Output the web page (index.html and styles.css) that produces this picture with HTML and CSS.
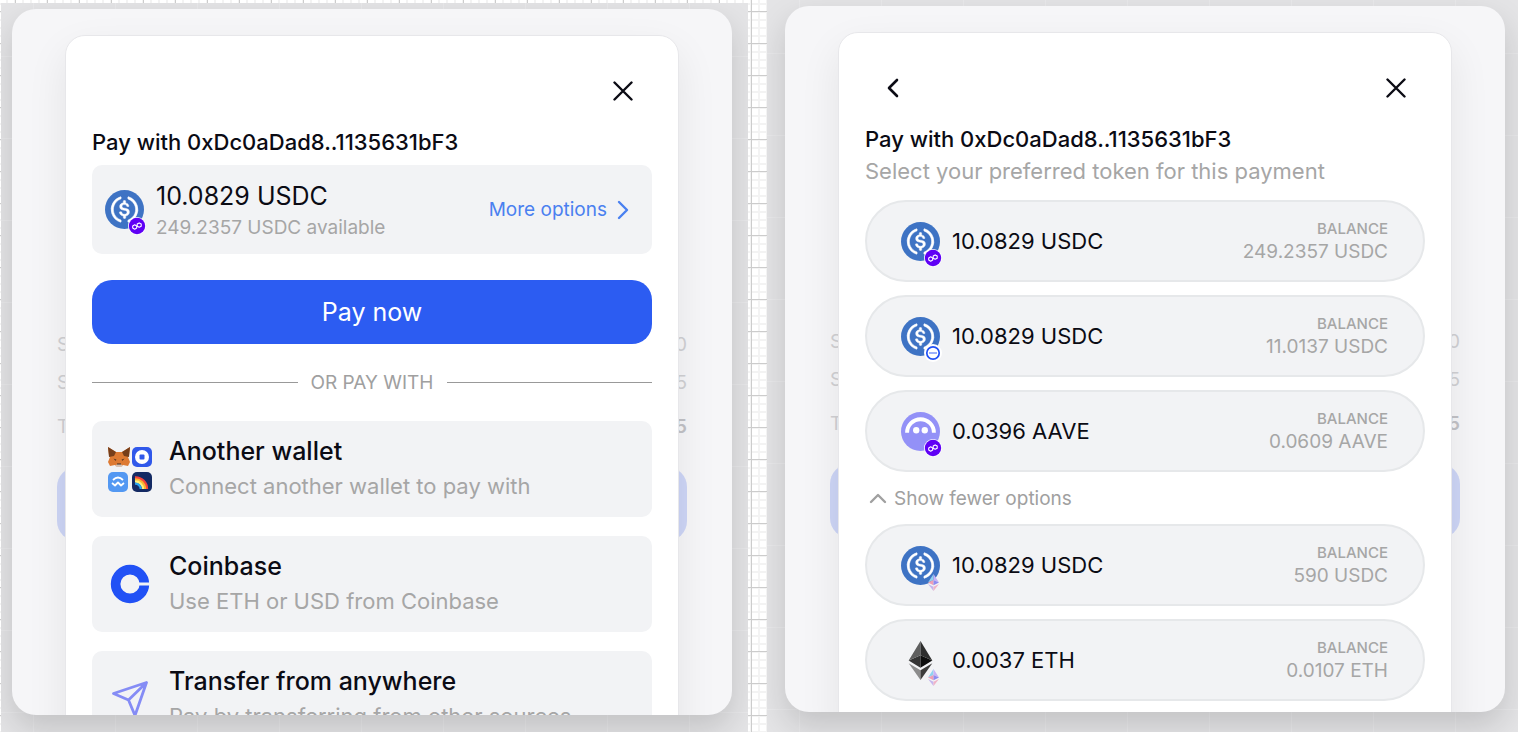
FILE: index.html
```html
<!DOCTYPE html>
<html lang="en">
<head>
    <meta charset="UTF-8">
    <meta name="viewport" content="width=device-width, initial-scale=1.0">
    <title>Pay with wallet</title>
    <link rel="stylesheet" href="styles.css">
</head>
<body>

<svg class="sprite" aria-hidden="true">
    <symbol id="close" viewBox="0 0 20 20">
        <path d="M1.500 1.500l17 17M18.500 1.500l-17 17" fill="none" stroke="currentColor" stroke-width="2.400" stroke-linecap="round"/>
    </symbol>
    <symbol id="usdc" viewBox="0 0 32 32">
        <circle cx="16" cy="16" r="16" fill="#3e73c4"/>
        <path fill="#fff" stroke="#fff" stroke-width=".4" d="M20.022 18.124c0-2.124-1.28-2.852-3.84-3.156-1.828-.243-2.193-.728-2.193-1.578 0-.85.61-1.396 1.828-1.396 1.097 0 1.707.364 2.011 1.275a.458.458 0 00.427.303h.975a.416.416 0 00.427-.425v-.06a3.04 3.04 0 00-2.743-2.489V9.142c0-.243-.183-.425-.487-.486h-.915c-.243 0-.426.182-.487.486v1.396c-1.829.242-2.986 1.456-2.986 2.974 0 2.002 1.218 2.791 3.778 3.095 1.707.303 2.255.668 2.255 1.639 0 .97-.853 1.638-2.011 1.638-1.585 0-2.133-.667-2.316-1.578-.06-.242-.244-.364-.427-.364h-1.036a.416.416 0 00-.426.425v.06c.243 1.518 1.219 2.61 3.23 2.914v1.457c0 .242.183.425.487.485h.915c.243 0 .426-.182.487-.485V21.34c1.829-.303 3.047-1.578 3.047-3.217z"/>
        <path fill="#fff" stroke="#fff" stroke-width=".4" d="M12.892 24.497c-4.754-1.7-7.192-6.98-5.424-11.653.914-2.55 2.925-4.491 5.424-5.402.244-.121.365-.303.365-.607v-.85c0-.242-.121-.424-.365-.485-.061 0-.183 0-.244.06a10.895 10.895 0 00-7.13 13.717c1.096 3.4 3.717 6.01 7.13 7.102.244.121.488 0 .548-.243.061-.06.061-.122.061-.243v-.85c0-.182-.182-.424-.365-.546zm6.46-18.936c-.244-.122-.488 0-.548.242-.061.061-.061.122-.061.243v.85c0 .243.182.485.365.607 4.754 1.7 7.192 6.98 5.424 11.653-.914 2.55-2.925 4.491-5.424 5.402-.244.121-.365.303-.365.607v.85c0 .242.121.424.365.485.061 0 .183 0 .244-.06a10.895 10.895 0 007.13-13.717c-1.096-3.46-3.778-6.07-7.13-7.162z"/>
    </symbol>
    <symbol id="aave" viewBox="0 0 32 32">
        <circle cx="16" cy="16" r="16" fill="#9391f7"/>
        <path d="M5 17a11 11 0 0 1 22 0" fill="none" stroke="#fff" stroke-width="3.200"/>
        <circle cx="12.500" cy="15" r="2.600" fill="#fff"/>
        <circle cx="19.500" cy="15" r="2.600" fill="#fff"/>
    </symbol>
    <symbol id="eth" viewBox="0 0 32 32">
        <path fill="#343434" d="M6.300 16.100l9.700-4.400v10.200z"/>
        <path fill="#0e0e0e" d="M25.700 16.100l-9.700-4.400v10.200z"/>
        <path fill="#5f5f5f" d="M16 0l-5 8.300-4.700 7.800 9.700-4.500z"/>
        <path fill="#2e2e2e" d="M16 0v11.600l9.700 4.500z"/>
        <path fill="#8c8c8c" d="M6.300 18.200l9.700 5.700v8z"/>
        <path fill="#3c3c3b" d="M25.700 18.200l-9.700 5.700v8z"/>
    </symbol>
    <symbol id="polygon" viewBox="0 0 18 18">
        <circle cx="9" cy="9" r="9" fill="#fff"/>
        <circle cx="9" cy="9" r="8.200" fill="#6000f5"/>
        <g fill="none" stroke="#fff" stroke-width="1.100" stroke-linejoin="round">
            <path d="M6.700 7.800l2 1.100v2.200l-2 1.100-2-1.100V8.900z"/>
            <path d="M11.200 5.900l2 1.100v2.200l-2 1.100-2-1.100V7z"/>
        </g>
    </symbol>
    <symbol id="base" viewBox="0 0 18 18">
        <circle cx="9" cy="9" r="9" fill="#fff"/>
        <circle cx="9" cy="9" r="6.200" fill="#fff" stroke="#2151f5" stroke-width="1.700"/>
        <path d="M5 9h8" stroke="#5a7cf7" stroke-width="1.200"/>
    </symbol>
    <symbol id="mainnet" viewBox="0 0 18 18">
        <path fill="#8fd3f0" d="M9.500 1v6L4 9.500z"/>
        <path fill="#c9b3f5" d="M9.500 1v6L15 9.500z"/>
        <path fill="#ef9fb5" d="M9.500 7v5.200L4 9.500z"/>
        <path fill="#8f8cf0" d="M9.500 7v5.200L15 9.500z"/>
        <path fill="#c5b6ee" d="M4 11l5.500 2.700V18z"/>
        <path fill="#f0b4c8" d="M15 11l-5.500 2.700V18z"/>
    </symbol>
</svg>

<div class="panel panel-left">
    <div class="stage">
        <div class="receipt">
            <div class="receipt-row"><span>S</span><span>0</span></div>
            <div class="receipt-row"><span>S</span><span>5</span></div>
            <div class="receipt-row receipt-total"><span>T</span><b>5</b></div>
            <div class="receipt-bar"></div>
        </div>

        <div class="modal">
            <div class="modal-head">
                <button class="icon-btn close-btn" aria-label="Close"><svg width="20" height="20"><use href="#close"/></svg></button>
            </div>
            <h2>Pay with 0xDc0aDad8..1135631bF3</h2>

            <div class="selected">
                <span class="token-icon">
                    <svg class="token" viewBox="0 0 32 32"><use href="#usdc"/></svg>
                    <svg class="badge" viewBox="0 0 18 18"><use href="#polygon"/></svg>
                </span>
                <div class="selected-text">
                    <div class="amount">10.0829 USDC</div>
                    <div class="available">249.2357 USDC available</div>
                </div>
                <button class="more-btn">More options
                    <svg width="12" height="20" viewBox="0 0 12 20"><path d="M2 2l8 8-8 8" fill="none" stroke="currentColor" stroke-width="2.400" stroke-linecap="round" stroke-linejoin="round"/></svg>
                </button>
            </div>

            <button class="pay-btn">Pay now</button>

            <div class="divider"><span>OR PAY WITH</span></div>

            <div class="options">
                <button class="option">
                    <span class="option-icon">
                        <svg width="46" height="46" viewBox="0 0 46 46">
                            <path fill="#dd7a33" d="M1 1l8 5h6l8-5-1 8-1 2 2 5-2 4-5-1-1 1H9l-1-1-5 1-2-4 2-5-1-2z"/>
                            <path fill="#763e1a" d="M1 1l8 5-2 4-5 1zM23 1l-8 5 2 4 5 1z"/>
                            <path fill="#3b2a20" d="M6.500 12.500l3 1.200-1 1zM17.500 12.500l-3 1.200 1 1zM10 17.500h4v1.500h-4z"/>
                            <path fill="#d7c1b3" d="M8 19.500l2-1h4l2 1-1.500 1.500h-5z"/>
                            <rect x="25" y="1" width="20" height="20" rx="5" fill="#3058ea"/>
                            <circle cx="35" cy="11" r="7" fill="#fff"/>
                            <rect x="32.500" y="8.500" width="5" height="5" rx="1" fill="#3058ea"/>
                            <rect x="1" y="26" width="20" height="20" rx="5" fill="#5398f2"/>
                            <path d="M6 34q5-5 10 0M5 37l3 2.500 3-3 3 3 3-2.500" fill="none" stroke="#fff" stroke-width="1.800" stroke-linejoin="round"/>
                            <rect x="25" y="26" width="20" height="20" rx="5" fill="#142a63"/>
                            <g fill="none" stroke-width="2.400">
                                <path d="M28 31.500a11.500 11.500 0 0 1 12 11.500" stroke="#f4433c"/>
                                <path d="M28 33.500a9.500 9.500 0 0 1 10 9.500" stroke="#ffb52e"/>
                                <path d="M28 35.500a7.500 7.500 0 0 1 8 7.500" stroke="#fff07a"/>
                                <path d="M28 37.700a5.300 5.300 0 0 1 5.800 5.300" stroke="#2aa5f0"/>
                            </g>
                        </svg>
                    </span>
                    <span class="option-text">
                        <span class="option-title">Another wallet</span>
                        <span class="option-desc">Connect another wallet to pay with</span>
                    </span>
                </button>
                <button class="option">
                    <span class="option-icon">
                        <svg width="40" height="40" viewBox="0 0 40 40">
                            <circle cx="20" cy="20" r="14.400" fill="none" stroke="#2151f5" stroke-width="9.600"/>
                            <path d="M28 20h12" stroke="#f2f3f5" stroke-width="3.200"/>
                        </svg>
                    </span>
                    <span class="option-text">
                        <span class="option-title">Coinbase</span>
                        <span class="option-desc">Use ETH or USD from Coinbase</span>
                    </span>
                </button>
                <button class="option">
                    <span class="option-icon">
                        <svg width="40" height="40" viewBox="0 0 40 40">
                            <path d="M36.500 3.500L3.500 14.500l15 6.500L25 36.500zM36.500 3.500L18.500 21" fill="none" stroke="#858cf5" stroke-width="2.800" stroke-linejoin="round"/>
                        </svg>
                    </span>
                    <span class="option-text">
                        <span class="option-title">Transfer from anywhere</span>
                        <span class="option-desc">Pay by transferring from other sources</span>
                    </span>
                </button>
            </div>
        </div>
    </div>
</div>

<div class="panel panel-right">
    <div class="stage">
        <div class="receipt">
            <div class="receipt-row"><span>S</span><span>0</span></div>
            <div class="receipt-row"><span>S</span><span>5</span></div>
            <div class="receipt-row receipt-total"><span>T</span><b>5</b></div>
            <div class="receipt-bar"></div>
        </div>

        <div class="modal">
            <div class="modal-head">
                <button class="icon-btn back-btn" aria-label="Back"><svg width="12" height="20" viewBox="0 0 12 20"><path d="M10 2l-8 8 8 8" fill="none" stroke="currentColor" stroke-width="2.600" stroke-linecap="round" stroke-linejoin="round"/></svg></button>
                <button class="icon-btn close-btn" aria-label="Close"><svg width="20" height="20"><use href="#close"/></svg></button>
            </div>
            <h2>Pay with 0xDc0aDad8..1135631bF3</h2>
            <p class="subtitle">Select your preferred token for this payment</p>

            <div class="tokens">
                <button class="token-row">
                    <span class="token-icon">
                        <svg class="token" viewBox="0 0 32 32"><use href="#usdc"/></svg>
                        <svg class="badge" viewBox="0 0 18 18"><use href="#polygon"/></svg>
                    </span>
                    <span class="token-amount">10.0829 USDC</span>
                    <span class="balance"><small>BALANCE</small>249.2357 USDC</span>
                </button>
                <button class="token-row">
                    <span class="token-icon">
                        <svg class="token" viewBox="0 0 32 32"><use href="#usdc"/></svg>
                        <svg class="badge" viewBox="0 0 18 18"><use href="#base"/></svg>
                    </span>
                    <span class="token-amount">10.0829 USDC</span>
                    <span class="balance"><small>BALANCE</small>11.0137 USDC</span>
                </button>
                <button class="token-row">
                    <span class="token-icon">
                        <svg class="token" viewBox="0 0 32 32"><use href="#aave"/></svg>
                        <svg class="badge" viewBox="0 0 18 18"><use href="#polygon"/></svg>
                    </span>
                    <span class="token-amount">0.0396 AAVE</span>
                    <span class="balance"><small>BALANCE</small>0.0609 AAVE</span>
                </button>
            </div>

            <button class="toggle-btn">
                <svg width="18" height="12" viewBox="0 0 18 12"><path d="M2 10l7-7 7 7" fill="none" stroke="currentColor" stroke-width="2.400" stroke-linecap="round" stroke-linejoin="round"/></svg>
                Show fewer options
            </button>

            <div class="tokens">
                <button class="token-row">
                    <span class="token-icon">
                        <svg class="token" viewBox="0 0 32 32"><use href="#usdc"/></svg>
                        <svg class="badge" viewBox="0 0 18 18"><use href="#mainnet"/></svg>
                    </span>
                    <span class="token-amount">10.0829 USDC</span>
                    <span class="balance"><small>BALANCE</small>590 USDC</span>
                </button>
                <button class="token-row">
                    <span class="token-icon">
                        <svg class="token" viewBox="0 0 32 32"><use href="#eth"/></svg>
                        <svg class="badge" viewBox="0 0 18 18"><use href="#mainnet"/></svg>
                    </span>
                    <span class="token-amount">0.0037 ETH</span>
                    <span class="balance"><small>BALANCE</small>0.0107 ETH</span>
                </button>
            </div>
        </div>
    </div>
</div>

</body>
</html>
```
FILE: styles.css
```css
* {
    box-sizing: border-box;
}
body {
    margin: 0;
    height: 100vh;
    display: flex;
    gap: 19px;
    padding-left: 1px;
    font-family: Inter, sans-serif;
    color: #0b0b14;
    background-color: #fff;
    background-image:
        linear-gradient(#ccc 1px, transparent 1px),
        linear-gradient(90deg, #ccc 1px, transparent 1px),
        linear-gradient(#f3f3f3 2px, transparent 2px),
        linear-gradient(90deg, #f3f3f3 2px, transparent 2px);
    background-size: 32px 32px, 32px 32px, 8px 8px, 8px 8px;
    background-position: 0 11px, 15px 0, 0 3px, 6px 0;
}
button {
    font-family: inherit;
    color: inherit;
    border: none;
    background: none;
    padding: 0;
    cursor: pointer;
}
svg {
    display: block;
    flex-shrink: 0;
}
.sprite {
    position: absolute;
    width: 0;
    height: 0;
}
.panel {
    min-width: 0;
    display: flex;
    overflow: hidden;
    background-color: #e4e4e6;
    background-image:
        linear-gradient(#e9e9eb 1px, transparent 1px),
        linear-gradient(90deg, #e9e9eb 1px, transparent 1px);
    background-size: 82px 82px;
    background-position: 32px 53px;
}
.panel-left {
    flex: 1 1 747px;
    margin-top: 3px;
    padding: 6px 16px 17px 11px;
}
.panel-right {
    flex: 1 1 751px;
    padding: 6px 13px 20px 18px;
}
.stage {
    position: relative;
    flex: 1;
    overflow: hidden;
    border-radius: 24px;
    background: #f6f6f8;
    box-shadow: 0 14px 32px rgba(0, 0, 0, 0.15);
}

/* order summary behind the modal */
.receipt {
    padding: 317px 45px 0;
    font-size: 19px;
    color: #d0d0d3;
}
.receipt-row {
    display: flex;
    justify-content: space-between;
    line-height: 38px;
}
.receipt-total {
    line-height: 50px;
}
.receipt-total b {
    color: #c2c2c6;
    font-weight: 600;
}
.receipt-bar {
    height: 74px;
    margin-top: 15px;
    border-radius: 20px;
    background: #cdd5f6;
}

.modal {
    position: absolute;
    top: 26px;
    left: 53px;
    right: 53px;
    min-height: 100%;
    padding: 26px;
    border: 1px solid #e7e7ea;
    border-radius: 20px;
    background: #fff;
    box-shadow: 0 16px 40px rgba(0, 0, 0, 0.08);
}
.modal-head {
    display: flex;
    align-items: center;
    height: 58px;
    padding: 0 19px 0 22px;
}
.icon-btn {
    display: flex;
}
.close-btn {
    margin-left: auto;
}
h2 {
    margin: 0;
    padding-top: 6px;
    font-size: 22px;
    font-weight: 500;
    line-height: 32px;
}
.subtitle {
    margin: 0 0 13px;
    font-size: 22px;
    line-height: 32px;
    color: #a6a6a6;
}
.token-icon {
    position: relative;
    flex-shrink: 0;
}
.token {
    width: 39px;
    height: 39px;
}
.badge {
    position: absolute;
    width: 18px;
    height: 18px;
    right: -2px;
    bottom: -6px;
}

.selected {
    display: flex;
    align-items: center;
    gap: 12px;
    margin-top: 7px;
    height: 89px;
    padding: 0 23px 0 13px;
    border-radius: 10px;
    background: #f2f3f5;
}
.selected-text {
    padding-top: 3px;
}
.amount {
    font-size: 25px;
    line-height: 34px;
}
.available {
    font-size: 19px;
    line-height: 30px;
    color: #a6a6a6;
}
.more-btn {
    display: flex;
    align-items: center;
    gap: 10px;
    margin-left: auto;
    font-size: 19px;
    color: #4a80f0;
}
.pay-btn {
    width: 100%;
    height: 64px;
    margin-top: 26px;
    border-radius: 20px;
    background: #2c5cf2;
    color: #fff;
    font-size: 25px;
}
.divider {
    display: flex;
    align-items: center;
    gap: 13px;
    height: 77px;
    font-size: 19px;
    color: #a0a0a0;
}
.divider::before,
.divider::after {
    content: "";
    flex: 1;
    height: 1px;
    background: #999;
}
.options {
    display: grid;
    gap: 19px;
}
.option {
    display: flex;
    align-items: center;
    height: 96px;
    padding-left: 15px;
    gap: 16px;
    border-radius: 10px;
    background: #f2f3f5;
    text-align: left;
}
.option-icon {
    width: 46px;
    display: flex;
    justify-content: center;
}
.option-title,
.option-desc {
    display: block;
    line-height: 35px;
}
.option-title {
    font-size: 25px;
    font-weight: 500;
}
.option-desc {
    font-size: 22px;
    color: #a6a6a6;
}

.tokens {
    display: grid;
    gap: 13px;
}
.token-row {
    display: flex;
    align-items: center;
    gap: 12px;
    height: 82px;
    padding: 0 35px 0 34px;
    border: 2px solid #e6e8ea;
    border-radius: 41px;
    background: #f2f3f5;
}
.token-amount {
    font-size: 22px;
}
.balance {
    margin-left: auto;
    padding-top: 2px;
    text-align: right;
    font-size: 19px;
    line-height: 26px;
    color: #a6a6a6;
}
.balance small {
    display: block;
    font-size: 15px;
    font-weight: 500;
    line-height: 20px;
}
.toggle-btn {
    display: flex;
    align-items: center;
    gap: 7px;
    height: 52px;
    padding-left: 4px;
    font-size: 19px;
    color: #a0a0a0;
}
```
